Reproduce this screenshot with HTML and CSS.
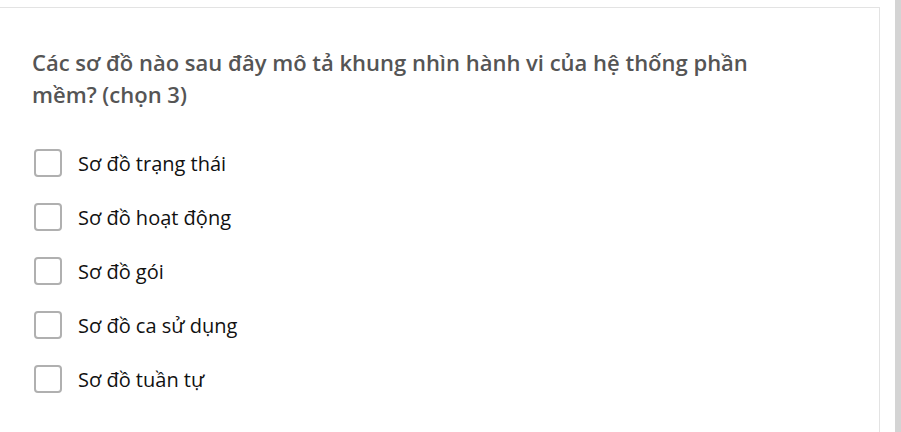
FILE: index.html
```html
<!DOCTYPE html>
<html lang="vi">
<head>
<meta charset="utf-8">
<link rel="stylesheet" href="styles.css">
</head>
<body>
<div class="page">
  <div class="card">
    <h2 class="question">Các sơ đồ nào sau đây mô tả khung nhìn hành vi của hệ thống phần mềm? (chọn 3)</h2>
    <ul class="options">
      <li class="option"><span class="box"></span><span class="label">Sơ đồ trạng thái</span></li>
      <li class="option"><span class="box"></span><span class="label">Sơ đồ hoạt động</span></li>
      <li class="option"><span class="box"></span><span class="label">Sơ đồ gói</span></li>
      <li class="option"><span class="box"></span><span class="label">Sơ đồ ca sử dụng</span></li>
      <li class="option"><span class="box"></span><span class="label">Sơ đồ tuần tự</span></li>
    </ul>
  </div>
  <div class="scroll"></div>
</div>
</body>
</html>
```
FILE: styles.css
```css
html, body {
  margin: 0;
  padding: 0;
  background: #fff;
  height: 100%;
  overflow: hidden;
}
.page {
  display: flex;
  height: 432px;
  font-family: "Open Sans", "Noto Sans", sans-serif;
}
.card {
  width: 880px;
  margin-top: 7px;
  border-top: 1px solid #e3e3e3;
  border-right: 1px solid #e3e3e3;
  box-sizing: border-box;
  padding: 38px 0 0 32px;
}
.question {
  margin: 0;
  max-width: 780px;
  font-size: 22px;
  font-weight: 600;
  line-height: 32px;
  color: #555;
}
.options {
  list-style: none;
  margin: 26px 0 0 0;
  padding: 0;
}
.option {
  display: flex;
  align-items: center;
  height: 54px;
}
.box {
  width: 28px;
  height: 28px;
  box-sizing: border-box;
  border: 2px solid #b0b0b0;
  border-radius: 4px;
  margin-left: 2px;
  margin-right: 16px;
}
.label {
  font-size: 20px;
  color: #111;
}
.scroll {
  margin-left: auto;
  width: 6px;
  background: #d4d4d4;
}
```
